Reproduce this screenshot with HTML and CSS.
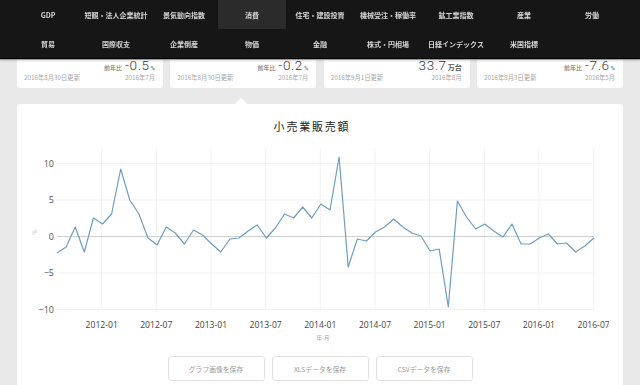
FILE: index.html
```html
<!DOCTYPE html>
<html lang="ja">
<head>
<meta charset="utf-8">
<title>小売業販売額</title>
<link rel="stylesheet" href="styles.css">
</head>
<body>
<header class="nav">
  <nav class="nav-grid">
    <a class="nav-item">GDP</a>
    <a class="nav-item">短観・法人企業統計</a>
    <a class="nav-item">景気動向指数</a>
    <a class="nav-item is-active">消費</a>
    <a class="nav-item">住宅・建設投資</a>
    <a class="nav-item">機械受注・稼働率</a>
    <a class="nav-item">鉱工業指数</a>
    <a class="nav-item">産業</a>
    <a class="nav-item">労働</a>
    <a class="nav-item">貿易</a>
    <a class="nav-item">国際収支</a>
    <a class="nav-item">企業倒産</a>
    <a class="nav-item">物価</a>
    <a class="nav-item">金融</a>
    <a class="nav-item">株式・円相場</a>
    <a class="nav-item">日経インデックス</a>
    <a class="nav-item">米国指標</a>
  </nav>
</header>

<main class="page">
  <div class="cards">
    <div class="card">
      <div class="card-value"><span class="label">前年比</span><span class="num">-0.5</span><span class="unit">%</span></div>
      <div class="card-meta"><span>2016年8月30日更新</span><span>2016年7月</span></div>
    </div>
    <div class="card">
      <div class="card-value"><span class="label">前年比</span><span class="num">-0.2</span><span class="unit">%</span></div>
      <div class="card-meta"><span>2016年8月30日更新</span><span>2016年7月</span></div>
    </div>
    <div class="card">
      <div class="card-value"><span class="num">33.7</span><span class="unit unit-jp">万台</span></div>
      <div class="card-meta"><span>2016年9月1日更新</span><span>2016年8月</span></div>
    </div>
    <div class="card">
      <div class="card-value"><span class="label">前年比</span><span class="num">-7.6</span><span class="unit">%</span></div>
      <div class="card-meta"><span>2016年8月3日更新</span><span>2016年5月</span></div>
    </div>
  </div>

  <section class="panel">
    <h1 class="panel-title">小売業販売額</h1>
    <svg class="chart" width="592" height="205" viewBox="17 140 592 205" xmlns="http://www.w3.org/2000/svg">
      <g class="grid">
        <line x1="57" y1="163.5" x2="594" y2="163.5"/>
        <line x1="57" y1="200" x2="594" y2="200"/>
        <line x1="57" y1="273" x2="594" y2="273"/>
        <line x1="57" y1="309.5" x2="594" y2="309.5"/>
        <line x1="101.7" y1="148" x2="101.7" y2="310"/>
        <line x1="156.3" y1="148" x2="156.3" y2="310"/>
        <line x1="211" y1="148" x2="211" y2="310"/>
        <line x1="265.6" y1="148" x2="265.6" y2="310"/>
        <line x1="320.3" y1="148" x2="320.3" y2="310"/>
        <line x1="375" y1="148" x2="375" y2="310"/>
        <line x1="429.6" y1="148" x2="429.6" y2="310"/>
        <line x1="484.3" y1="148" x2="484.3" y2="310"/>
        <line x1="538.9" y1="148" x2="538.9" y2="310"/>
        <line x1="593.6" y1="148" x2="593.6" y2="310"/>
      </g>
      <line class="zero" x1="57" y1="236.5" x2="594" y2="236.5"/>
      <polyline class="series" points="57,253 66.1,247 75.2,227 84.3,252 93.4,218 102.5,224 111.6,214 120.7,169 129.8,200 138.9,214 148,238 157.1,245 166.2,227 175.3,233 184.4,244 193.5,230 202.6,235 211.7,244 220.8,252 229.9,239 239,238 248.1,231 257.2,225 266.3,238 275.4,228 284.5,214 293.6,218 302.7,207 311.8,218 320.9,204 330,210 339.1,157 348.2,267 357.3,239 366.4,241 375.5,232 384.6,227 393.7,219 402.8,227 411.9,233 421,236 430.1,251 439.2,249 448.3,307 457.4,201 466.5,217 475.6,229 484.7,224 493.8,231 502.9,237 512,224 521.1,244 530.2,244 539.3,238 548.4,234 557.5,244 566.6,243 575.7,252 584.8,246 593.9,238"/>
      <g class="ytick">
        <text x="54" y="166.5">10</text>
        <text x="54" y="203">5</text>
        <text x="54" y="239.5">0</text>
        <text x="54" y="276">−5</text>
        <text x="54" y="312.5">−10</text>
      </g>
      <g class="xtick">
        <text x="101.7" y="328">2012-01</text>
        <text x="156.3" y="328">2012-07</text>
        <text x="211" y="328">2013-01</text>
        <text x="265.6" y="328">2013-07</text>
        <text x="320.3" y="328">2014-01</text>
        <text x="375" y="328">2014-07</text>
        <text x="429.6" y="328">2015-01</text>
        <text x="484.3" y="328">2015-07</text>
        <text x="538.9" y="328">2016-01</text>
        <text x="593.6" y="328">2016-07</text>
      </g>
      <text class="axis-title" x="323" y="340">年-月</text>
      <text class="axis-title" x="0" y="0" transform="translate(37 232) rotate(-90)">%</text>
    </svg>
    <div class="actions">
      <button class="btn">グラフ画像を保存</button>
      <button class="btn">XLSデータを保存</button>
      <button class="btn">CSVデータを保存</button>
    </div>
  </section>
</main>
</body>
</html>
```

FILE: styles.css
```css
* { box-sizing: border-box; }

html, body {
  margin: 0;
  padding: 0;
}

body {
  background: #e9e9e9;
  font-family: "Noto Sans CJK JP", "Noto Sans", sans-serif;
  color: #333;
  overflow: hidden;
  height: 385px;
}

/* ---------- top navigation (fixed, overlays scrolled content) ---------- */
.nav {
  position: fixed;
  top: 0;
  left: 0;
  right: 0;
  height: 59px;
  background: #161616;
  border-bottom: 1px solid #050505;
  box-shadow: 0 1px 0 #9a9a9a, 0 2px 2px rgba(0,0,0,0.15);
  z-index: 10;
}

.nav-grid {
  width: 612px;
  margin: 0 auto;
  display: grid;
  grid-template-columns: repeat(9, 68px);
  grid-auto-rows: 29px;
}

.nav-item {
  display: flex;
  align-items: center;
  justify-content: center;
  font-size: 7px;
  font-weight: 700;
  color: #d6d6d6;
  white-space: nowrap;
  text-decoration: none;
}

.nav-item.is-active {
  background: #2b2b2b;
}

/* ---------- page ---------- */
.page {
  padding: 36px 17px 0;
}

.cards {
  display: grid;
  grid-template-columns: repeat(4, 146px);
  justify-content: space-between;
}

.card {
  height: 52px;
  background: #fff;
  border-radius: 3px;
  display: flex;
  flex-direction: column;
  justify-content: flex-end;
  padding: 0 8px 6px 7px;
}

.card-value {
  display: flex;
  justify-content: flex-end;
  align-items: baseline;
  line-height: 11px;
  color: #444;
}

.card-value .label {
  font-size: 6px;
  color: #666;
  margin-right: 3px;
}

.card-value .num {
  font-family: Roboto, "Open Sans", sans-serif;
  font-weight: 300;
  font-size: 13.5px;
  letter-spacing: 0.6px;
  color: #3a3a3a;
}

.card-value .unit {
  font-family: Roboto, sans-serif;
  font-size: 6px;
  margin-left: 1px;
  color: #555;
}

.card-value .unit-jp {
  font-family: "Noto Sans CJK JP", sans-serif;
  font-size: 7px;
  font-weight: 700;
  color: #555;
}

.card-meta {
  display: flex;
  justify-content: space-between;
  font-size: 6.3px;
  line-height: 9px;
  color: #a8a8a8;
}

/* ---------- chart panel ---------- */
.panel {
  position: relative;
  margin-top: 16px;
  background: #fff;
  border-radius: 3px;
  height: 300px;
}

.panel::before {
  content: "";
  position: absolute;
  top: -6px;
  left: 218px;
  border-left: 6.5px solid transparent;
  border-right: 6.5px solid transparent;
  border-bottom: 6px solid #fff;
}

.panel-title {
  margin: 0;
  padding: 15px 16px 7px 0;
  font-size: 11px;
  line-height: 14px;
  font-weight: 400;
  letter-spacing: 1.8px;
  text-align: center;
  color: #222;
}

.chart {
  display: block;
}

.grid line {
  stroke: #f1f1f1;
  stroke-width: 1;
}

.zero {
  stroke: #cfcfcf;
  stroke-width: 1;
}

.series {
  fill: none;
  stroke: #6f9dc2;
  stroke-width: 1.2;
  stroke-linejoin: round;
}

.ytick text {
  font-family: "Open Sans", sans-serif;
  font-size: 9px;
  fill: #555;
  text-anchor: end;
}

.xtick text {
  font-family: "Open Sans", sans-serif;
  font-size: 8.6px;
  fill: #444;
  text-anchor: middle;
}

.axis-title {
  font-family: "Noto Sans CJK JP", sans-serif;
  font-size: 5.5px;
  fill: #aaa;
  text-anchor: middle;
}

.actions {
  display: flex;
  justify-content: center;
  gap: 7px;
  margin-top: 11px;
}

.btn {
  width: 97px;
  height: 25px;
  background: #fff;
  border: 1px solid #e3e3e3;
  border-radius: 3px;
  font-family: "Noto Sans CJK JP", sans-serif;
  font-size: 6.8px;
  color: #999;
  padding: 0;
}
```
